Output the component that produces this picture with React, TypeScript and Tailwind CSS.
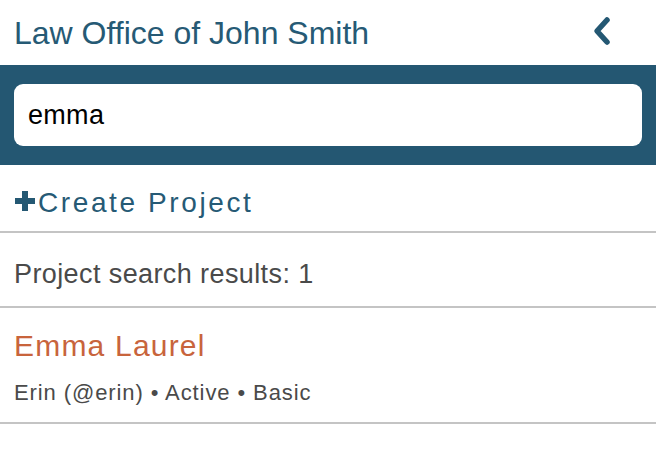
import React from "react";

export default function App() {
  return (
    <div className="w-[656px] h-[454px] bg-white overflow-hidden" style={{ fontFamily: '"Liberation Sans", Arial, Helvetica, sans-serif' }}>
      <div className="h-[65px] flex items-center justify-between pl-[14px] pr-[44px]">
        <div className="text-[32px] text-[#265a75] leading-none tracking-[0px]">Law Office of John Smith</div>
        <svg width="20" height="30" viewBox="0 0 20 30" className="mt-[-3px]">
          <path d="M15 4 L5 15 L15 26" fill="none" stroke="#245873" strokeWidth="5.5" strokeLinecap="round" strokeLinejoin="round" />
        </svg>
      </div>
      <div className="h-[100px] bg-[#245772] px-[14px] pt-[19px]">
        <div className="h-[62px] bg-white rounded-[9px] flex items-center px-[14px]">
          <span className="text-[27px] leading-none text-black tracking-[0.3px]">emma</span>
        </div>
      </div>
      <div className="h-[68px] flex items-start pl-[14px] pt-[24px] border-b-2 border-[#c4c4c4]">
        <svg width="22" height="22" viewBox="0 0 22 22" className="mt-[1px]">
          <path d="M8 1h6v7h7v6h-7v7H8v-7H1V8h7z" fill="#245873" />
        </svg>
        <span className="text-[28px] leading-none text-[#265a75] tracking-[2.6px] ml-[2px]">Create Project</span>
      </div>
      <div className="h-[75px] pl-[14px] pt-[28px] border-b-2 border-[#c4c4c4]">
        <div className="text-[27px] leading-none text-[#4a4a4a] tracking-[0.4px]">Project search results: 1</div>
      </div>
      <div className="h-[116px] pl-[14px] pt-[23px] border-b-2 border-[#c4c4c4]">
        <div className="text-[30px] leading-none text-[#c8643c] tracking-[1.2px]">Emma Laurel</div>
        <div className="text-[22px] leading-none text-[#4a4a4a] tracking-[0.9px] mt-[21px]">Erin (@erin) • Active • Basic</div>
      </div>
    </div>
  );
}
